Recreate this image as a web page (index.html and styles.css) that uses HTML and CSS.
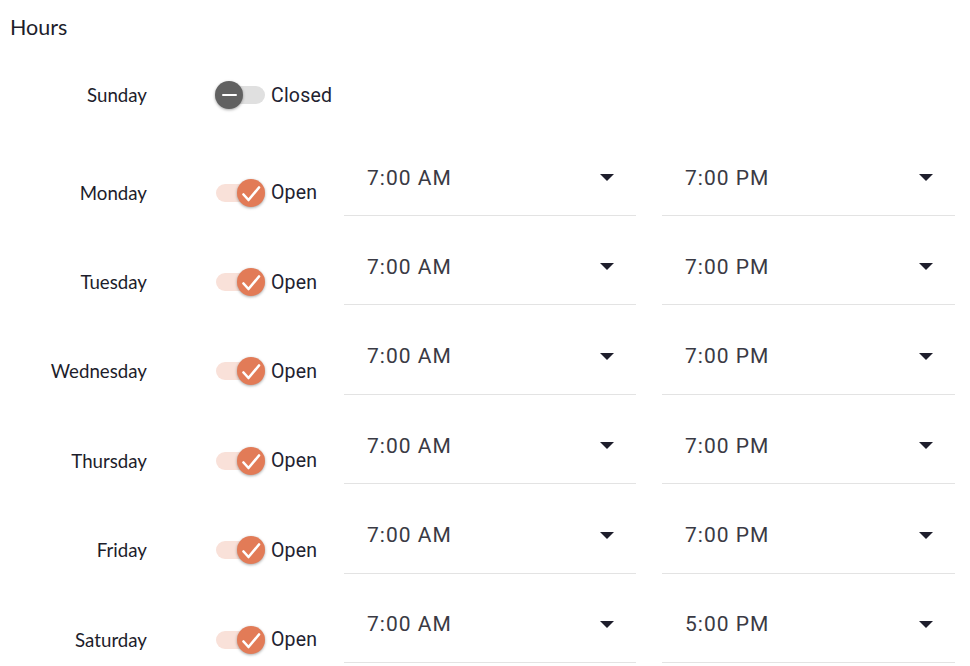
FILE: index.html
```html
<!DOCTYPE html>
<html>
<head>
<title>Hours</title>
<link rel="stylesheet" href="styles.css">
</head>
<body>

<div class="hours">
 <h2 class="hours-title">Hours</h2>

 <div class="day-row day-closed">
  <div class="day-name">Sunday</div>
  <div class="day-toggle">
   <span class="switch">
    <span class="switch-track"></span>
    <span class="switch-thumb"><span class="thumb-dash"></span></span>
   </span>
   <span class="toggle-text">Closed</span>
  </div>
 </div>

 <div class="day-row">
  <div class="day-name">Monday</div>
  <div class="day-toggle">
   <span class="switch is-on">
    <span class="switch-track"></span>
    <span class="switch-thumb"><svg viewBox="0 0 24 24"><path d="M4.5 13.5l5 5.5L20 6.5"/></svg></span>
   </span>
   <span class="toggle-text">Open</span>
  </div>
  <div class="time-field"><span class="time-value">7:00 AM</span><svg class="drop-arrow" viewBox="0 0 14 7"><path d="M0 0h14L7 7z"/></svg></div>
  <div class="time-field"><span class="time-value">7:00 PM</span><svg class="drop-arrow" viewBox="0 0 14 7"><path d="M0 0h14L7 7z"/></svg></div>
 </div>

 <div class="day-row">
  <div class="day-name">Tuesday</div>
  <div class="day-toggle">
   <span class="switch is-on">
    <span class="switch-track"></span>
    <span class="switch-thumb"><svg viewBox="0 0 24 24"><path d="M4.5 13.5l5 5.5L20 6.5"/></svg></span>
   </span>
   <span class="toggle-text">Open</span>
  </div>
  <div class="time-field"><span class="time-value">7:00 AM</span><svg class="drop-arrow" viewBox="0 0 14 7"><path d="M0 0h14L7 7z"/></svg></div>
  <div class="time-field"><span class="time-value">7:00 PM</span><svg class="drop-arrow" viewBox="0 0 14 7"><path d="M0 0h14L7 7z"/></svg></div>
 </div>

 <div class="day-row">
  <div class="day-name">Wednesday</div>
  <div class="day-toggle">
   <span class="switch is-on">
    <span class="switch-track"></span>
    <span class="switch-thumb"><svg viewBox="0 0 24 24"><path d="M4.5 13.5l5 5.5L20 6.5"/></svg></span>
   </span>
   <span class="toggle-text">Open</span>
  </div>
  <div class="time-field"><span class="time-value">7:00 AM</span><svg class="drop-arrow" viewBox="0 0 14 7"><path d="M0 0h14L7 7z"/></svg></div>
  <div class="time-field"><span class="time-value">7:00 PM</span><svg class="drop-arrow" viewBox="0 0 14 7"><path d="M0 0h14L7 7z"/></svg></div>
 </div>

 <div class="day-row">
  <div class="day-name">Thursday</div>
  <div class="day-toggle">
   <span class="switch is-on">
    <span class="switch-track"></span>
    <span class="switch-thumb"><svg viewBox="0 0 24 24"><path d="M4.5 13.5l5 5.5L20 6.5"/></svg></span>
   </span>
   <span class="toggle-text">Open</span>
  </div>
  <div class="time-field"><span class="time-value">7:00 AM</span><svg class="drop-arrow" viewBox="0 0 14 7"><path d="M0 0h14L7 7z"/></svg></div>
  <div class="time-field"><span class="time-value">7:00 PM</span><svg class="drop-arrow" viewBox="0 0 14 7"><path d="M0 0h14L7 7z"/></svg></div>
 </div>

 <div class="day-row">
  <div class="day-name">Friday</div>
  <div class="day-toggle">
   <span class="switch is-on">
    <span class="switch-track"></span>
    <span class="switch-thumb"><svg viewBox="0 0 24 24"><path d="M4.5 13.5l5 5.5L20 6.5"/></svg></span>
   </span>
   <span class="toggle-text">Open</span>
  </div>
  <div class="time-field"><span class="time-value">7:00 AM</span><svg class="drop-arrow" viewBox="0 0 14 7"><path d="M0 0h14L7 7z"/></svg></div>
  <div class="time-field"><span class="time-value">7:00 PM</span><svg class="drop-arrow" viewBox="0 0 14 7"><path d="M0 0h14L7 7z"/></svg></div>
 </div>

 <div class="day-row">
  <div class="day-name">Saturday</div>
  <div class="day-toggle">
   <span class="switch is-on">
    <span class="switch-track"></span>
    <span class="switch-thumb"><svg viewBox="0 0 24 24"><path d="M4.5 13.5l5 5.5L20 6.5"/></svg></span>
   </span>
   <span class="toggle-text">Open</span>
  </div>
  <div class="time-field"><span class="time-value">7:00 AM</span><svg class="drop-arrow" viewBox="0 0 14 7"><path d="M0 0h14L7 7z"/></svg></div>
  <div class="time-field"><span class="time-value">5:00 PM</span><svg class="drop-arrow" viewBox="0 0 14 7"><path d="M0 0h14L7 7z"/></svg></div>
 </div>
</div>

</body>
</html>
```

FILE: styles.css
```css
body {
 margin: 0;
 background: #fff;
 font-family: Lato, "Liberation Sans", sans-serif;
 color: #1d1d2b;
}

.hours {
 padding: 0 10px;
}

.hours-title {
 margin: 15px 0 0;
 font-size: 21.5px;
 line-height: 25px;
 font-weight: 400;
}

.day-row {
 display: flex;
 align-items: center;
 height: 89.4px;
}
.day-closed {
 height: 30px;
 margin: 40px 0 38px;
}

.day-name {
 width: 137px;
 text-align: right;
 font-size: 18.7px;
}

.day-toggle {
 display: flex;
 align-items: center;
 width: 129px;
 margin-left: 68px;
}

.switch {
 position: relative;
 width: 50px;
 height: 28px;
 margin-right: 6px;
}
.switch-track {
 position: absolute;
 left: 1px;
 right: 0;
 top: 5px;
 height: 18px;
 border-radius: 9px;
 background: #e0e0e0;
}
.switch-thumb {
 position: absolute;
 left: 0;
 top: 0;
 width: 28px;
 height: 28px;
 border-radius: 50%;
 background: #616161;
 box-shadow: 0 1px 3px rgba(0, 0, 0, 0.35);
 display: flex;
 align-items: center;
 justify-content: center;
}
.thumb-dash {
 width: 15px;
 height: 2px;
 border-radius: 1px;
 background: #fff;
}
.switch.is-on .switch-track {
 background: #f9e1d9;
}
.switch.is-on .switch-thumb {
 left: 22px;
 background: #e27b57;
}
.switch-thumb svg {
 width: 24px;
 height: 24px;
 fill: none;
 stroke: #fff;
 stroke-width: 2.6;
 stroke-linecap: round;
 stroke-linejoin: round;
}

.toggle-text {
 font-family: Roboto, "Liberation Sans", sans-serif;
 font-size: 19.5px;
 letter-spacing: 0.2px;
 color: #222230;
}

.time-field {
 align-self: flex-start;
 display: flex;
 align-items: center;
 justify-content: space-between;
 width: 292px;
 height: 68px;
 box-sizing: border-box;
 padding: 17px 22px 25px 23px;
 border-bottom: 1px solid #e3e3e3;
}
.time-field + .time-field {
 margin-left: 26px;
 width: 293px;
}
.time-value {
 font-family: Roboto, "Liberation Sans", sans-serif;
 font-size: 21px;
 letter-spacing: 1px;
 line-height: 26px;
 color: #3a3a44;
}
.drop-arrow {
 width: 14px;
 height: 7px;
 fill: #1e1e2c;
}
```
